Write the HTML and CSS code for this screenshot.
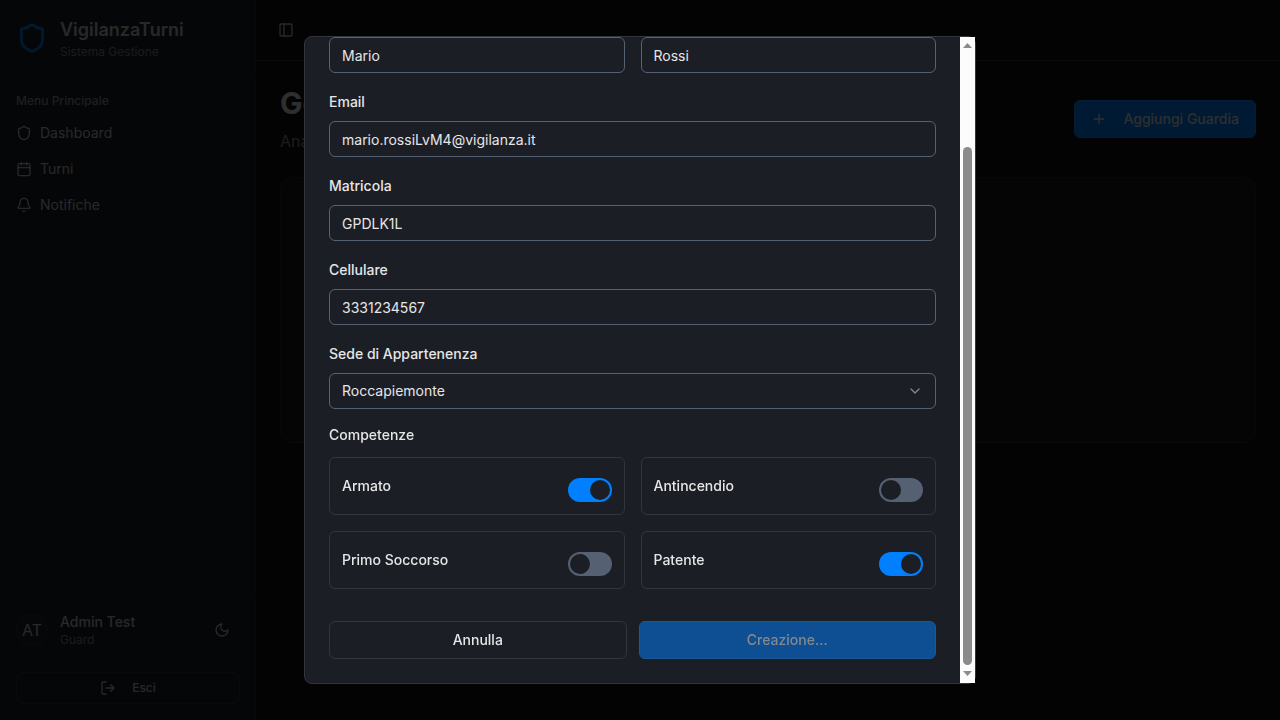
FILE: index.html
```html
<!DOCTYPE html>
<html lang="it">
<head>
<meta charset="utf-8">
<meta name="viewport" content="width=device-width, initial-scale=1">
<title>VigilanzaTurni</title>
<link rel="stylesheet" href="styles.css">
</head>
<body>
<div class="app">
  <aside class="sidebar">
    <div class="brand">
      <svg class="icon brand-icon" viewBox="0 0 24 24"><path d="M20 13c0 5-3.5 7.5-7.66 8.95a1 1 0 0 1-.67-.01C7.500 20.500 4 18 4 13V6a1 1 0 0 1 1-1c2 0 4.500-1.200 6.240-2.720a1.170 1.170 0 0 1 1.520 0C14.510 3.810 17 5 19 5a1 1 0 0 1 1 1z"/></svg>
      <div>
        <div class="brand-name">VigilanzaTurni</div>
        <div class="small muted">Sistema Gestione</div>
      </div>
    </div>
    <nav class="menu">
      <div class="menu-title">Menu Principale</div>
      <ul class="menu-list">
        <li><a class="menu-link" href="#"><svg class="icon" viewBox="0 0 24 24"><path d="M20 13c0 5-3.5 7.5-7.66 8.95a1 1 0 0 1-.67-.01C7.500 20.500 4 18 4 13V6a1 1 0 0 1 1-1c2 0 4.500-1.200 6.240-2.720a1.170 1.170 0 0 1 1.520 0C14.510 3.810 17 5 19 5a1 1 0 0 1 1 1z"/></svg>Dashboard</a></li>
        <li><a class="menu-link" href="#"><svg class="icon" viewBox="0 0 24 24"><path d="M8 2v4M16 2v4M3 10h18"/><rect width="18" height="18" x="3" y="4" rx="2"/></svg>Turni</a></li>
        <li><a class="menu-link" href="#"><svg class="icon" viewBox="0 0 24 24"><path d="M10.268 21a2 2 0 0 0 3.464 0"/><path d="M3.262 15.326A1 1 0 0 0 4 17h16a1 1 0 0 0 .74-1.673C19.410 13.956 18 12.499 18 8A6 6 0 0 0 6 8c0 4.499-1.411 5.956-2.738 7.326"/></svg>Notifiche</a></li>
      </ul>
    </nav>
    <div class="account">
      <div class="account-row">
        <div class="avatar">AT</div>
        <div class="account-text">
          <div class="account-name">Admin Test</div>
          <div class="account-role muted">Guard</div>
        </div>
        <button class="icon-button" type="button" aria-label="Cambia tema"><svg class="icon" viewBox="0 0 24 24"><path d="M12 3a6 6 0 0 0 9 9 9 9 0 1 1-9-9Z"/></svg></button>
      </div>
      <button class="logout" type="button"><svg class="icon" viewBox="0 0 24 24"><path d="M9 21H5a2 2 0 0 1-2-2V5a2 2 0 0 1 2-2h4M16 17l5-5-5-5M21 12H9"/></svg>Esci</button>
    </div>
  </aside>
  <div class="page">
    <header class="topbar">
      <button class="icon-button" type="button" aria-label="Barra laterale"><svg class="icon" viewBox="0 0 24 24"><rect width="18" height="18" x="3" y="3" rx="2"/><path d="M9 3v18"/></svg></button>
    </header>
    <main class="main">
      <div class="heading">
        <div>
          <h1 class="title">Gestione Guardie</h1>
          <p class="subtitle">Anagrafica guardie</p>
        </div>
        <button class="add" type="button"><svg class="icon" viewBox="0 0 24 24"><path d="M5 12h14M12 5v14"/></svg>Aggiungi Guardia</button>
      </div>
      <section class="panel"></section>
    </main>
  </div>
</div>

<div class="overlay">
  <div class="dialog" role="dialog" aria-modal="true" aria-label="Nuova guardia">
    <form class="form">
      <div class="pair">
        <input class="control" type="text" value="Mario" aria-label="Nome">
        <input class="control" type="text" value="Rossi" aria-label="Cognome">
      </div>
      <div class="field"><label for="email">Email</label><input class="control" id="email" type="email" value="mario.rossiLvM4@vigilanza.it"></div>
      <div class="field"><label for="matricola">Matricola</label><input class="control" id="matricola" type="text" value="GPDLK1L"></div>
      <div class="field"><label for="cellulare">Cellulare</label><input class="control" id="cellulare" type="tel" value="3331234567"></div>
      <div class="field">
        <label for="sede">Sede di Appartenenza</label>
        <div class="select-wrap">
          <select class="control" id="sede"><option>Roccapiemonte</option></select>
          <svg class="icon chevron" viewBox="0 0 24 24"><path d="m6 9 6 6 6-6"/></svg>
        </div>
      </div>
      <fieldset class="skills">
        <legend class="skills-title">Competenze</legend>
        <div class="pair">
          <div class="skill"><label for="armato">Armato</label><input class="switch" id="armato" type="checkbox" role="switch" checked></div>
          <div class="skill"><label for="antincendio">Antincendio</label><input class="switch" id="antincendio" type="checkbox" role="switch"></div>
          <div class="skill"><label for="soccorso">Primo Soccorso</label><input class="switch" id="soccorso" type="checkbox" role="switch"></div>
          <div class="skill"><label for="patente">Patente</label><input class="switch" id="patente" type="checkbox" role="switch" checked></div>
        </div>
      </fieldset>
      <div class="actions">
        <button class="button" type="button">Annulla</button>
        <button class="button primary" type="submit" disabled>Creazione...</button>
      </div>
    </form>
    <div class="scrollbar" aria-hidden="true">
      <svg class="arrow" viewBox="0 0 9 5"><path d="M0 5 4.500 0 9 5z"/></svg>
      <div class="track"><div class="thumb"></div></div>
      <svg class="arrow" viewBox="0 0 9 5"><path d="M0 0h9L4.500 5z"/></svg>
    </div>
  </div>
</div>
</body>
</html>
```
FILE: styles.css
```css
* { box-sizing: border-box; }

body {
  margin: 0;
  background: #111218;
  color: #e6e6e6;
  font: 14px/20px Inter, "Liberation Sans", sans-serif;
}

button, input, select { font: inherit; color: inherit; }
button { cursor: pointer; }

.icon {
  width: 16px;
  height: 16px;
  flex: none;
  fill: none;
  stroke: currentColor;
  stroke-width: 2;
  stroke-linecap: round;
  stroke-linejoin: round;
}

.muted { color: #85888c; }
.small { font-size: 12px; line-height: 16px; }

.app { display: flex; min-height: 100vh; }

.sidebar {
  display: flex;
  flex-direction: column;
  width: 256px;
  flex: none;
  background: #1c2028;
  box-shadow: inset -1px 0 #252932;
  color: #c8c8c8;
}

.brand {
  display: flex;
  align-items: center;
  gap: 12px;
  padding: 16px;
  border-bottom: 1px solid #252932;
}
.brand-icon { width: 32px; height: 32px; color: #0080ff; }
.brand-name { font-size: 18px; line-height: 28px; font-weight: 600; }

.menu { flex: 1; padding: 8px 16px; }
.menu-title {
  font-size: 12px;
  line-height: 32px;
  font-weight: 500;
  color: #969698;
}
.menu-list { display: grid; gap: 4px; margin: 0; padding: 0; list-style: none; }
.menu-link {
  display: flex;
  align-items: center;
  gap: 8px;
  height: 32px;
  color: inherit;
  text-decoration: none;
}

.account {
  display: grid;
  gap: 24px;
  padding: 16px;
  border-top: 1px solid #252932;
}
.account-row { display: flex; align-items: center; gap: 12px; }
.avatar {
  display: grid;
  place-items: center;
  width: 32px;
  height: 32px;
  border: 1px solid #30353e;
  border-radius: 50%;
  background: #222731;
  font-size: 16px;
}
.account-text { flex: 1; }
.account-name { font-weight: 500; }
.account-role { font-size: 12px; line-height: 16px; }

.icon-button {
  display: grid;
  place-items: center;
  width: 36px;
  height: 36px;
  padding: 0;
  border: 0;
  background: none;
}

.logout {
  display: flex;
  align-items: center;
  justify-content: center;
  gap: 16px;
  height: 32px;
  border: 1px solid #30353e;
  border-radius: 6px;
  background: none;
  font-size: 12px;
  font-weight: 500;
}

.page { flex: 1; min-width: 0; }
.topbar {
  display: flex;
  align-items: center;
  height: 61px;
  padding: 0 12px;
  border-bottom: 1px solid #2b2f38;
  color: #c8c8c8;
}
.main { display: grid; gap: 24px; padding: 24px; }
.heading { display: flex; align-items: center; justify-content: space-between; }
.title { margin: 0 0 8px; font-size: 30px; line-height: 36px; font-weight: 700; }
.subtitle { margin: 0; font-size: 16px; line-height: 24px; color: #85888c; }
.add {
  display: flex;
  align-items: center;
  gap: 16px;
  height: 38px;
  padding: 0 16px;
  border: 1px solid #1a8cff;
  border-radius: 6px;
  background: #0080ff;
  font-weight: 500;
}
.panel {
  height: 266px;
  border: 1px solid #252830;
  border-radius: 12px;
  background: #191b21;
}

.overlay {
  position: fixed;
  inset: 0;
  display: grid;
  place-items: center;
  background: rgba(0, 0, 0, 0.8);
}

.dialog {
  display: flex;
  width: 100%;
  max-width: 672px;
  max-height: 90vh;
  border: 1px solid #31353e;
  border-radius: 8px;
  background: #1c1e26;
}

.form {
  display: grid;
  gap: 16px;
  flex: 1;
  min-width: 0;
  padding: 0 24px 24px;
}
.pair { display: grid; grid-template-columns: 1fr 1fr; gap: 16px; }
.field { display: grid; gap: 6px; }
.field label { line-height: 26px; font-weight: 500; }

.control {
  width: 100%;
  min-width: 0;
  height: 36px;
  padding: 0 12px;
  border: 1px solid #566173;
  border-radius: 6px;
  background: transparent;
  appearance: none;
}

.select-wrap { display: grid; align-items: center; }
.select-wrap > * { grid-area: 1 / 1; }
.chevron { justify-self: end; margin-right: 13px; color: #85868a; pointer-events: none; }

.skills { min-width: 0; margin: 0; padding: 0; border: 0; }
.skills-title { padding: 0 0 12px; font-weight: 500; }
.skill {
  display: flex;
  align-items: center;
  justify-content: space-between;
  padding: 12px;
  border: 1px solid #31353c;
  border-radius: 6px;
  font-weight: 500;
}

.switch {
  appearance: none;
  display: flex;
  width: 44px;
  height: 24px;
  margin: 8px 0 0;
  padding: 2px;
  border-radius: 12px;
  background: #566073;
}
.switch::before {
  content: "";
  width: 20px;
  height: 20px;
  border-radius: 50%;
  background: #1c1e26;
}
.switch:checked { justify-content: flex-end; background: #0080ff; }

.actions {
  display: grid;
  grid-template-columns: 1fr 1fr;
  gap: 12px;
  padding-top: 16px;
}
.button {
  height: 38px;
  border: 1px solid #31353c;
  border-radius: 6px;
  background: transparent;
  font-weight: 500;
}
.primary { border-color: #1d5899; background: #0e4f93; color: #85898e; }

.scrollbar {
  display: flex;
  flex-direction: column;
  align-items: center;
  width: 15px;
  padding: 6px 0 7px;
  background: #fcfcfc;
}
.arrow { width: 9px; height: 5px; fill: #8b8b8b; }
.track {
  display: flex;
  flex: 1;
  align-items: flex-end;
  padding-bottom: 6px;
}
.thumb { width: 9px; height: 84%; border-radius: 5px; background: #8b8b8b; }
```
